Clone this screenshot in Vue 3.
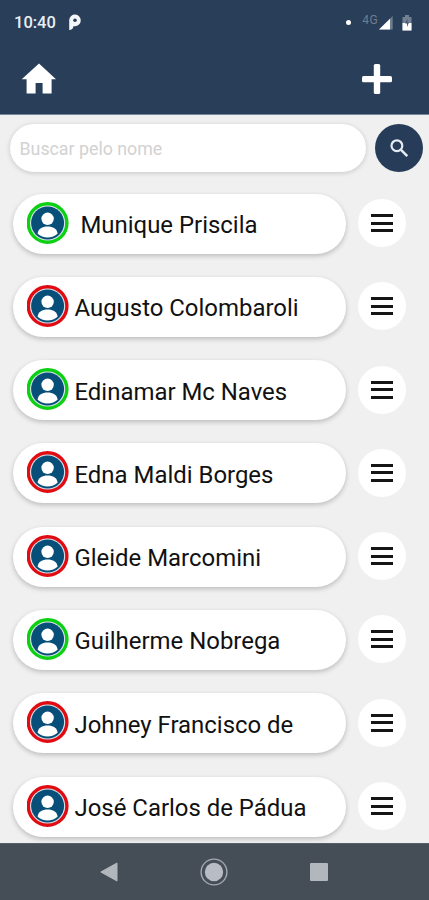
<template>
  <div class="screen">
    <header class="header">
      <div class="status">
        <span class="time">10:40</span>
        <svg class="parking" width="14" height="18" viewBox="0 0 14 18">
          <path d="M1.2 17V7A5.8 5.8 0 1 1 6.9 13.2H5.4C5.4 15.2 3.6 17 1.2 17Z" fill="#f4f7fa" />
          <circle cx="7" cy="7.2" r="1.8" fill="#293e59" />
        </svg>
        <i class="dot"></i>
        <span class="network">4G</span>
        <svg class="signal" width="14" height="14" viewBox="0 0 14 14">
          <path d="M13.7 0V13.5H0Z" fill="#6f7d8e" />
          <path d="M11 2.7V13.5H0Z" fill="#fff" />
        </svg>
        <svg class="battery" width="10" height="16" viewBox="0 0 10 16">
          <path d="M3 0H7V2H9.5V15.5H.5V2H3Z" fill="#718092" />
          <path d="M.5 8H9.5V15.5H.5Z" fill="#fff" />
          <path d="M5.5 3.5L3.2 8.5H5V12L7 7.5H5.4Z" fill="#46566c" />
        </svg>
      </div>
      <div class="toolbar">
        <svg class="home" width="36" height="32" viewBox="0 0 36 32">
          <path d="M18 .5L35 16.3H30.6V30.5H21.6V20H14.6V30.5H5.6V16.3H.7Z" fill="#fff" />
        </svg>
        <svg class="add" width="30" height="30" viewBox="0 0 30 30" fill="#fff">
          <rect x="11.8" y="0" width="6.4" height="30" rx="1.6" />
          <rect x="0" y="11.9" width="30" height="6.4" rx="1.6" />
        </svg>
      </div>
    </header>

    <main class="content">
      <div class="searchBar">
        <input v-model="search" class="searchInput" type="text" placeholder="Buscar pelo nome" />
        <button class="searchBtn">
          <svg width="20" height="20" viewBox="0 0 20 20" fill="none" stroke="#e4ebf2">
            <circle cx="7.9" cy="7.7" r="5.4" stroke-width="2.2" />
            <path d="M11.8 11.6L18.3 18.1" stroke-width="2.6" />
          </svg>
        </button>
      </div>

      <div v-for="item in list" :key="item.name" class="row">
        <div class="card">
          <svg class="avatar" width="42" height="42" viewBox="0.4 0 42 42">
            <circle cx="21" cy="21" r="19.3" fill="#d9e4ec" :stroke="item.active ? '#0cd012' : '#e10c12'" stroke-width="3.4" />
            <circle cx="21" cy="21" r="16.5" fill="#074e79" />
            <circle cx="21" cy="16.8" r="6.2" fill="#fff" />
            <path d="M11 31.8C11.4 27 15.8 24.6 21 24.6S30.6 27 31 31.8C28.4 34.2 25 35.4 21 35.4S13.6 34.2 11 31.8Z" fill="#fff" />
          </svg>
          <span class="name">{{ item.name }}</span>
        </div>
        <button class="menu">
          <i></i>
          <i></i>
          <i></i>
        </button>
      </div>
    </main>

    <nav class="navbar">
      <svg width="18" height="20" viewBox="0 0 18 20">
        <path d="M17 1V19L.8 10Z" fill="#b2b7be" stroke="#b2b7be" stroke-linejoin="round" />
      </svg>
      <svg width="28" height="28" viewBox="0 0 28 28">
        <circle cx="14" cy="14" r="12.9" fill="none" stroke="#a3a9b1" stroke-width="1.4" />
        <circle cx="14" cy="14" r="9.2" fill="#b8bcc3" />
      </svg>
      <i class="square"></i>
    </nav>
  </div>
</template>

<script setup>
import { ref } from "vue";

const search = ref("");

const list = ref([
  { name: " Munique Priscila", active: true },
  { name: "Augusto Colombaroli", active: false },
  { name: "Edinamar Mc Naves", active: true },
  { name: "Edna Maldi Borges", active: false },
  { name: "Gleide Marcomini", active: false },
  { name: "Guilherme Nobrega", active: true },
  { name: "Johney Francisco de", active: false },
  { name: "José Carlos de Pádua", active: false },
]);
</script>

<style>
body {
  margin: 0;
}
</style>

<style scoped>
.screen {
  width: 429px;
  height: 900px;
  display: flex;
  flex-direction: column;
  overflow: hidden;
  background-color: #f0f0f0;
  font-family: Roboto, "Liberation Sans", sans-serif;
}
button {
  border: 0;
  padding: 0;
}
/* header */
.header {
  height: 114px;
  flex-shrink: 0;
  border-bottom: 1px solid #77869a;
  background-color: #293e59;
}
.status {
  height: 46px;
  display: flex;
  align-items: center;
  padding: 0 17px 0 14px;
  color: #e9eef4;
}
.time {
  width: 42px;
  font-size: 16.5px;
  font-weight: 500;
  line-height: 20px;
}
.parking {
  margin: -2px 0 0 11.5px;
}
.dot {
  width: 5.5px;
  height: 5.5px;
  margin: -1px 0 0 auto;
  border-radius: 50%;
  background-color: #fff;
}
.network {
  margin: -7px 1px 0 11px;
  font-size: 12px;
  line-height: 14px;
  letter-spacing: 0.4px;
  color: #6f7d8e;
}
.signal {
  margin-right: 9px;
}
.battery {
  margin-top: -1px;
}
.toolbar {
  height: 64px;
  display: flex;
  align-items: center;
  justify-content: space-between;
  padding: 1px 37px 0 21px;
}
/* content */
.content {
  flex: 1;
  min-height: 0;
  overflow: hidden;
}
.searchBar {
  height: 48px;
  display: flex;
  justify-content: space-between;
  padding: 9px 6px 21.5px 9.5px;
}
.searchInput {
  width: 356.5px;
  height: 48px;
  box-sizing: border-box;
  border: 0;
  border-radius: 24px;
  padding: 1px 10px 0;
  outline: none;
  background-color: #fff;
  box-shadow: 0 1px 5px rgba(0, 0, 0, 0.18);
  font-family: inherit;
  font-size: 17.8px;
}
.searchInput::placeholder {
  color: #d2d2d2;
}
.searchBtn {
  width: 48px;
  height: 48px;
  display: flex;
  align-items: center;
  justify-content: center;
  border-radius: 50%;
  background-color: #263c58;
}
.row {
  height: 60px;
  display: flex;
  align-items: center;
  margin-bottom: 23.3px;
  padding-left: 12.5px;
}
.card {
  width: 333px;
  height: 60px;
  box-sizing: border-box;
  display: flex;
  align-items: center;
  padding-left: 14px;
  border-radius: 30px;
  background-color: #fff;
  box-shadow: 0 2px 5px rgba(0, 0, 0, 0.22);
}
.avatar {
  margin-top: -2px;
}
.name {
  margin: 3px 0 0 6px;
  font-size: 23.93px;
  line-height: 28px;
  white-space: pre;
  color: #111;
}
.menu {
  width: 48px;
  height: 48px;
  display: flex;
  flex-direction: column;
  align-items: center;
  justify-content: center;
  gap: 4.5px;
  margin: -1px 0 0 12px;
  border-radius: 50%;
  background-color: #fff;
}
.menu i {
  width: 22px;
  height: 3px;
  background-color: #151515;
}
/* bottom navigation */
.navbar {
  height: 57px;
  flex-shrink: 0;
  box-sizing: border-box;
  display: flex;
  align-items: center;
  justify-content: space-between;
  padding: 0 101px 0 100px;
  border-top: 1px solid #596067;
  background-color: #454d57;
}
.square {
  width: 18.5px;
  height: 18.5px;
  border-radius: 1px;
  background-color: #b2b7be;
}
</style>
